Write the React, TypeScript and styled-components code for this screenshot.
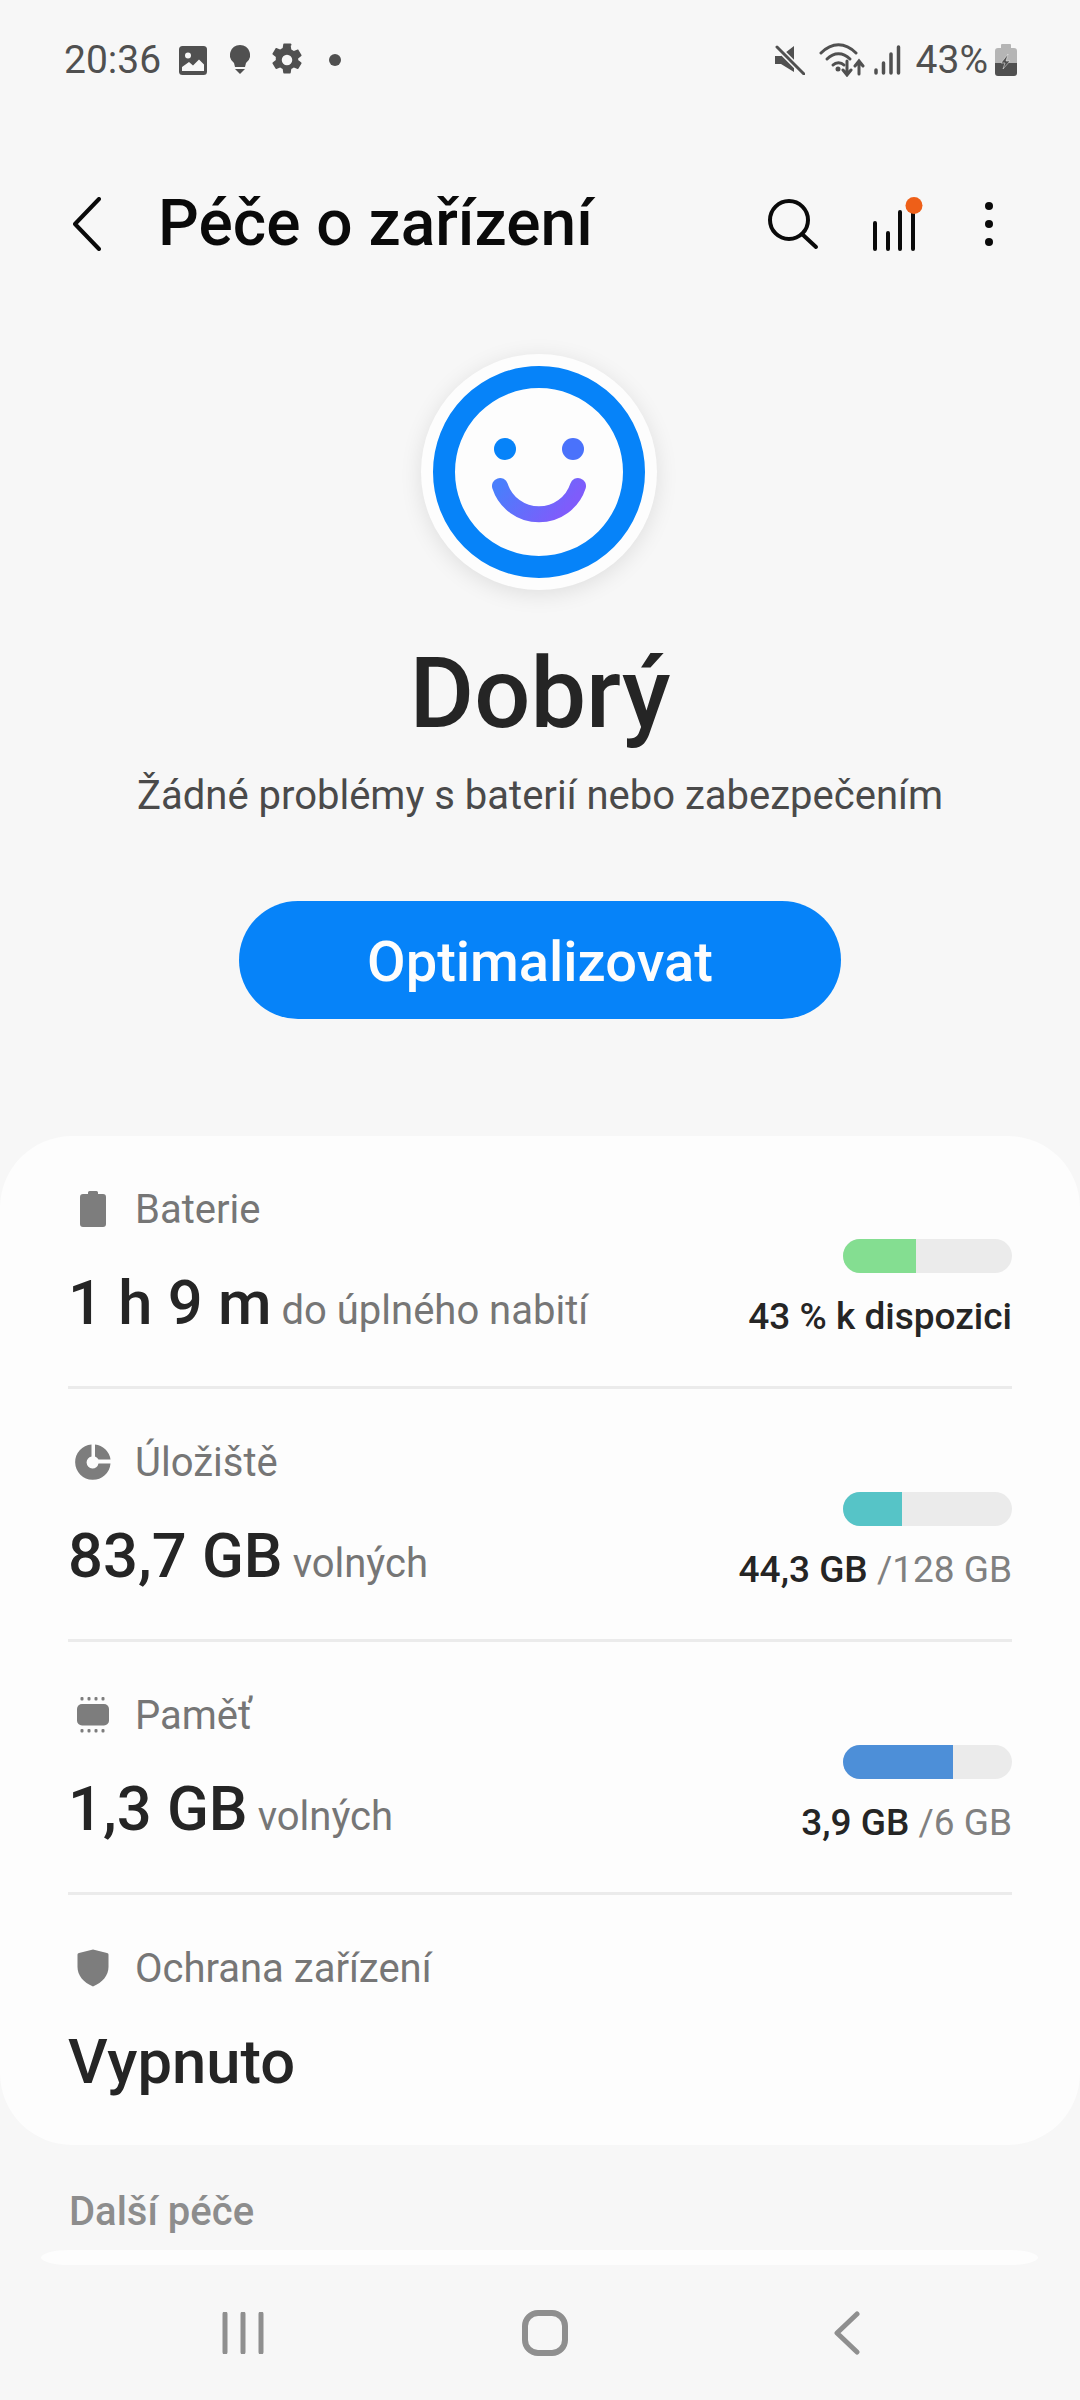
import React from "react";
import styled, { createGlobalStyle } from "styled-components";

const GlobalStyle = createGlobalStyle`
  html, body {
    margin: 0;
    padding: 0;
    background: #f7f7f7;
  }
`;

const Screen = styled.div`
  width: 1080px;
  height: 2400px;
  display: flex;
  flex-direction: column;
  overflow: hidden;
  background: #f7f7f7;
  font-family: Roboto, "Liberation Sans", sans-serif;
`;

const StatusBar = styled.div`
  height: 60px;
  padding: 30px 63px 0 64px;
  display: flex;
  align-items: center;
  justify-content: space-between;
  color: #505050;
  font-size: 39px;
`;

const StatusGroup = styled.div`
  display: flex;
  align-items: center;
`;

const StatusText = styled.span<{ $ml?: number }>`
  margin-left: ${(p) => p.$ml ?? 0}px;
`;

const Glyph = styled.svg<{ $ml?: number }>`
  display: block;
  flex: none;
  margin-left: ${(p) => p.$ml ?? 0}px;
`;

const TopBar = styled.div`
  height: 132px;
  margin-top: 68px;
  padding: 0 86px 0 73px;
  display: flex;
  align-items: center;
`;

const Title = styled.h1`
  margin: 0 0 0 57px;
  flex: 1;
  font-size: 64px;
  font-weight: 500;
  color: #0a0a0a;
  line-height: 72px;
  white-space: nowrap;
`;

const Hero = styled.div`
  display: flex;
  flex-direction: column;
  align-items: center;
`;

const FaceBadge = styled.div`
  width: 236px;
  height: 236px;
  margin: 64px 2px 0 0;
  border-radius: 50%;
  background: #fdfdfd;
  box-shadow: 0 4px 22px rgba(0, 0, 0, 0.1);
  display: flex;
  align-items: center;
  justify-content: center;
`;

const Status = styled.div`
  margin-top: 47px;
  font-size: 99px;
  line-height: 112px;
  font-weight: 500;
  color: #252525;
`;

const Subtitle = styled.div`
  margin-top: 22px;
  font-size: 40px;
  line-height: 50px;
  color: #4a4a4a;
`;

const OptimizeButton = styled.button`
  width: 602px;
  height: 118px;
  margin-top: 80px;
  padding: 4px 0 0;
  border: none;
  border-radius: 59px;
  background: #0683f9;
  color: #fdfdfd;
  font-family: inherit;
  font-size: 56px;
  font-weight: 500;
`;

const Card = styled.div`
  margin-top: 117px;
  height: 1009px;
  flex: none;
  padding: 0 68px;
  box-sizing: border-box;
  border-radius: 72px;
  background: #fdfdfd;
`;

const Row = styled.div<{ $last?: boolean }>`
  height: 253px;
  box-sizing: border-box;
  padding-top: 47px;
  border-bottom: ${(p) => (p.$last ? "none" : "3px solid #ebebeb")};
  display: flex;
  justify-content: space-between;
`;

const RowMain = styled.div`
  display: flex;
  flex-direction: column;
`;

const RowLabel = styled.div`
  display: flex;
  align-items: center;
  height: 52px;
  font-size: 40px;
  color: #767676;
`;

const LabelIcon = styled.div`
  width: 50px;
  margin-right: 17px;
  display: flex;
  align-items: center;
  justify-content: center;
`;

const RowValue = styled.div`
  margin-top: 32px;
  display: flex;
  align-items: baseline;
  font-size: 61.5px;
  line-height: 72px;
  font-weight: 500;
  color: #252525;
`;

const RowUnit = styled.span`
  margin-left: 10px;
  font-size: 40px;
  font-weight: 400;
  color: #767676;
`;

const RowSide = styled.div`
  display: flex;
  flex-direction: column;
  align-items: flex-end;
  padding-top: 56px;
`;

const BarTrack = styled.div`
  width: 169px;
  height: 34px;
  border-radius: 17px;
  background: #ebebeb;
  overflow: hidden;
`;

const BarFill = styled.div<{ $color: string }>`
  height: 100%;
  background: ${(p) => p.$color};
`;

const SideText = styled.div`
  margin-top: 22px;
  font-size: 37px;
  line-height: 44px;
  font-weight: 500;
  color: #252525;
`;

const SideMuted = styled.span`
  font-weight: 400;
  color: #808080;
`;

const SectionTitle = styled.div`
  margin: 43px 0 0 69px;
  font-size: 40px;
  line-height: 48px;
  font-weight: 500;
  color: #8d8d8d;
`;

const ContentEnd = styled.div`
  flex: 1;
  min-height: 0;
  overflow: hidden;
`;

const NextCard = styled.div`
  height: 15px;
  margin: 14px 42px 0 41px;
  border-radius: 28px / 7.5px;
  background: #fdfdfd;
`;

const NavBar = styled.div`
  height: 135px;
  flex: none;
  padding-left: 10px;
  display: grid;
  grid-template-columns: repeat(3, 302px);
  justify-content: center;
  align-items: center;
`;

const NavSlot = styled.div`
  display: flex;
  justify-content: center;
`;

type StatRow = {
  label: string;
  icon: React.ReactNode;
  value: string;
  unit?: string;
  bar?: { pct: number; color: string };
  strong?: string;
  muted?: string;
};

const grey = "#7d7d7d";

const rows: StatRow[] = [
  {
    label: "Baterie",
    icon: (
      <Glyph width="28" height="38" viewBox="0 0 28 38">
        <path d="M9 2.500a1.500 1.500 0 0 1 1.500-1.500h7A1.500 1.500 0 0 1 19 2.500V4h5a3 3 0 0 1 3 3v27a3 3 0 0 1-3 3H4a3 3 0 0 1-3-3V7a3 3 0 0 1 3-3h5z" fill={grey} />
      </Glyph>
    ),
    value: "1 h 9 m",
    unit: "do úplného nabití",
    bar: { pct: 43, color: "#84de91" },
    strong: "43 % k dispozici",
  },
  {
    label: "Úložiště",
    icon: (
      <Glyph width="36" height="36" viewBox="0 0 36 36">
        <path d="M16.500 0.500v12a6 6 0 1 0 7 7h12A17.700 17.700 0 1 1 16.500 0.500z" fill={grey} />
        <path d="M20 0.500A17.700 17.700 0 0 1 35.500 15.500h-12a6 6 0 0 0-3.500-3z" fill={grey} />
      </Glyph>
    ),
    value: "83,7 GB",
    unit: "volných",
    bar: { pct: 35, color: "#56c4c7" },
    strong: "44,3 GB",
    muted: "/128 GB",
  },
  {
    label: "Paměť",
    icon: (
      <Glyph width="34" height="38" viewBox="0 0 34 38">
        <rect x="1" y="8" width="32" height="21.500" rx="5" fill={grey} />
        {[6, 13, 20, 27].map((x) => (
          <React.Fragment key={x}>
            <rect x={x - 1.5} y="1" width="3" height="3.500" rx="1" fill={grey} />
            <rect x={x - 1.5} y="33" width="3" height="3.500" rx="1" fill={grey} />
          </React.Fragment>
        ))}
      </Glyph>
    ),
    value: "1,3 GB",
    unit: "volných",
    bar: { pct: 65, color: "#4d8fd8" },
    strong: "3,9 GB",
    muted: "/6 GB",
  },
  {
    label: "Ochrana zařízení",
    icon: (
      <Glyph width="32" height="38" viewBox="0 0 32 38">
        <path d="M16 0.500 30 4a1.500 1.500 0 0 1 1.500 1.500V18c0 8.500-6 15.500-15.500 19.500C6.500 33.500.5 26.500.5 18V5.500A1.500 1.500 0 0 1 2 4z" fill={grey} />
      </Glyph>
    ),
    value: "Vypnuto",
  },
];

const App: React.FC = () => {
  return (
    <Screen>
      <GlobalStyle />
      <StatusBar>
        <StatusGroup>
          <StatusText>20:36</StatusText>
          <Glyph width="28" height="29" viewBox="0 0 28 29" $ml={18}>
            <rect width="28" height="29" rx="3.500" fill="#505050" />
            <circle cx="9" cy="9.500" r="3" fill="#f7f7f7" />
            <path d="M3 25v-4l7-5 4 3.500 6-6 5 5V25z" fill="#f7f7f7" />
          </Glyph>
          <Glyph width="20" height="30" viewBox="0 0 20 30" $ml={23}>
            <path d="M10 0a10 10 0 0 1 6 18l-1 4H5l-1-4a10 10 0 0 1 6-18z" fill="#505050" />
            <path d="M5 24h10l-5 5z" fill="#505050" />
          </Glyph>
          <Glyph width="36" height="36" viewBox="0 0 24 24" $ml={19}>
            <path
              fill="#505050"
              d="M19.430 12.980c.04-.32.07-.640.07-.980s-.03-.660-.07-.980l2.110-1.650c.190-.150.240-.420.120-.640l-2-3.460c-.120-.220-.390-.300-.610-.220l-2.490 1c-.520-.400-1.080-.730-1.690-.980l-.380-2.650A.488.488 0 0 0 14 1h-4c-.250 0-.460.180-.490.420l-.380 2.650c-.610.250-1.170.590-1.690.980l-2.490-1c-.230-.090-.490 0-.610.220l-2 3.460c-.130.220-.070.490.120.640l2.110 1.650c-.040.320-.070.650-.070.980s.03.660.07.980l-2.110 1.650c-.190.150-.240.420-.120.640l2 3.460c.120.220.390.300.610.220l2.490-1c.520.400 1.080.730 1.690.980l.380 2.650c.030.240.240.420.490.420h4c.250 0 .460-.180.490-.420l.380-2.650c.610-.250 1.170-.590 1.690-.980l2.490 1c.230.090.490 0 .610-.220l2-3.460c.120-.220.070-.490-.120-.640l-2.110-1.650zM12 15.500a3.500 3.500 0 1 1 0-7 3.500 3.500 0 0 1 0 7z"
            />
          </Glyph>
          <Glyph width="12" height="12" viewBox="0 0 12 12" $ml={24}>
            <circle cx="6" cy="6" r="6" fill="#505050" />
          </Glyph>
        </StatusGroup>
        <StatusGroup>
          <Glyph width="30" height="30" viewBox="0 0 30 30">
            <path d="M0 11h6L19 1v26L6 19H0z" fill="#505050" />
            <path d="M2 2 29 29" stroke="#f7f7f7" strokeWidth="6" />
            <path d="M2 2 29 29" stroke="#505050" strokeWidth="3" strokeLinecap="round" />
          </Glyph>
          <Glyph width="46" height="34" viewBox="0 0 46 34" $ml={14}>
            <g fill="none" stroke="#505050" strokeWidth="3" strokeLinecap="round">
              <path d="M2 10C13-1 26-1 37 10" />
              <path d="M8 16C15 9 24 9 31 16" />
              <path d="M14 22C17 19 22 19 25 22" />
              <path d="M28 18v13M24 27l4 5 4-5" />
              <path d="M40 31V19M36 23l4-5 4 5" />
            </g>
            <circle cx="19" cy="26" r="2.500" fill="#505050" />
          </Glyph>
          <Glyph width="28" height="30" viewBox="0 0 28 30" $ml={8}>
            <g stroke="#505050" strokeWidth="3.500" strokeLinecap="round">
              <path d="M3 25v3M10.500 18v10M18 9v19M25.500 2v26" />
            </g>
          </Glyph>
          <StatusText $ml={15}>43%</StatusText>
          <Glyph width="22" height="32" viewBox="0 0 22 32" $ml={7}>
            <path d="M7 0h8a1 1 0 0 1 1 1v3h3a3 3 0 0 1 3 3v12H0V7a3 3 0 0 1 3-3h3V1a1 1 0 0 1 1-1z" fill="#b5b5b5" />
            <path d="M0 19h22v10a3 3 0 0 1-3 3H3a3 3 0 0 1-3-3z" fill="#505050" />
            <path d="M13 10 6 19h4l-2 6 7-8h-4z" fill="#505050" stroke="#f7f7f7" strokeWidth="0.500" />
          </Glyph>
        </StatusGroup>
      </StatusBar>

      <TopBar>
        <Glyph width="28" height="54" viewBox="0 0 28 54">
          <path d="M26 2 2 27l24 25" fill="none" stroke="#0a0a0a" strokeWidth="4" strokeLinecap="round" strokeLinejoin="round" />
        </Glyph>
        <Title>Péče o zařízení</Title>
        <Glyph width="52" height="52" viewBox="0 0 52 52">
          <circle cx="22" cy="22" r="19" fill="none" stroke="#0a0a0a" strokeWidth="4" />
          <path d="M35 36 49 49" stroke="#0a0a0a" strokeWidth="4" strokeLinecap="round" />
        </Glyph>
        <Glyph width="52" height="54" viewBox="0 0 52 54" $ml={53}>
          <g stroke="#0a0a0a" strokeWidth="4" strokeLinecap="round">
            <path d="M3 26v26M16 36v16M28 15v37M41 10v42" />
          </g>
          <circle cx="42" cy="8.500" r="8.500" fill="#ee5f18" />
        </Glyph>
        <Glyph width="10" height="46" viewBox="0 0 10 46" $ml={60}>
          <circle cx="5" cy="5" r="4" fill="#0a0a0a" />
          <circle cx="5" cy="23" r="4" fill="#0a0a0a" />
          <circle cx="5" cy="41" r="4" fill="#0a0a0a" />
        </Glyph>
      </TopBar>

      <Hero>
        <FaceBadge>
          <svg width="212" height="212" viewBox="0 0 212 212">
            <defs>
              <linearGradient id="smile" x1="0" y1="0" x2="1" y2="0.300">
                <stop offset="0" stopColor="#4a7efc" />
                <stop offset="1" stopColor="#7f5cfb" />
              </linearGradient>
            </defs>
            <circle cx="106" cy="106" r="95" fill="none" stroke="#0683f9" strokeWidth="22" />
            <circle cx="72" cy="83" r="11" fill="#0683f9" />
            <circle cx="140" cy="83" r="11" fill="#4a72fb" />
            <path d="M67 120A41 41 0 0 0 145 120" fill="none" stroke="url(#smile)" strokeWidth="16" strokeLinecap="round" />
          </svg>
        </FaceBadge>
        <Status>Dobrý</Status>
        <Subtitle>Žádné problémy s baterií nebo zabezpečením</Subtitle>
        <OptimizeButton>Optimalizovat</OptimizeButton>
      </Hero>

      <Card>
        {rows.map((row, i) => (
          <Row key={row.label} $last={i === rows.length - 1}>
            <RowMain>
              <RowLabel>
                <LabelIcon>{row.icon}</LabelIcon>
                {row.label}
              </RowLabel>
              <RowValue>
                {row.value}
                {row.unit && <RowUnit>{row.unit}</RowUnit>}
              </RowValue>
            </RowMain>
            {row.bar && (
              <RowSide>
                <BarTrack>
                  <BarFill $color={row.bar.color} style={{ width: `${row.bar.pct}%` }} />
                </BarTrack>
                <SideText>
                  {row.strong}
                  {row.muted && <SideMuted> {row.muted}</SideMuted>}
                </SideText>
              </RowSide>
            )}
          </Row>
        ))}
      </Card>

      <ContentEnd>
        <SectionTitle>Další péče</SectionTitle>
        <NextCard />
      </ContentEnd>

      <NavBar>
        <NavSlot>
          <Glyph width="42" height="42" viewBox="0 0 42 42">
            <path d="M3 2v38M21 2v38M39 2v38" stroke="#8f8f8f" strokeWidth="5" strokeLinecap="round" />
          </Glyph>
        </NavSlot>
        <NavSlot>
          <Glyph width="46" height="46" viewBox="0 0 46 46">
            <rect x="3" y="3" width="40" height="40" rx="13" fill="none" stroke="#8f8f8f" strokeWidth="6" />
          </Glyph>
        </NavSlot>
        <NavSlot>
          <Glyph width="26" height="44" viewBox="0 0 26 44">
            <path d="M23 3 3 22l20 19" fill="none" stroke="#8f8f8f" strokeWidth="5" strokeLinecap="round" strokeLinejoin="round" />
          </Glyph>
        </NavSlot>
      </NavBar>
    </Screen>
  );
};

export default App;
